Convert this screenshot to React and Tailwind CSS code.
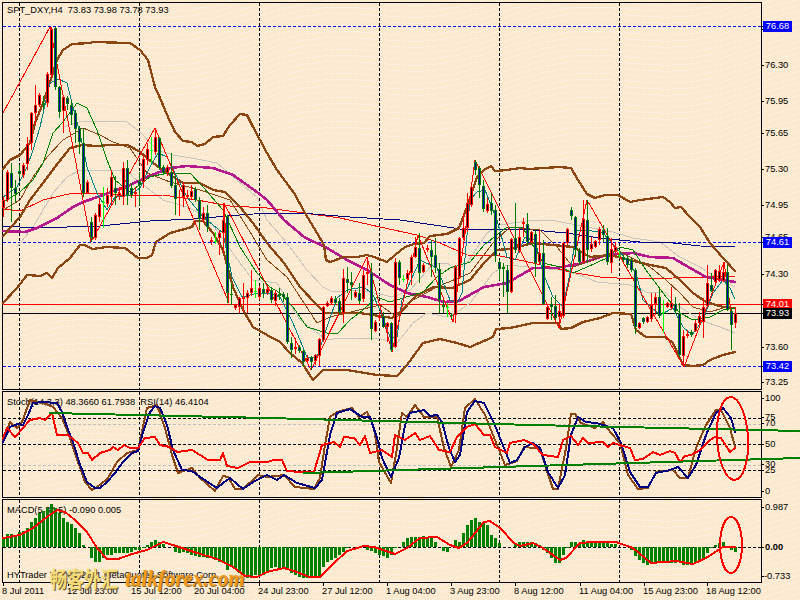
import React from "react";

const C = `3 r 197 200 208 217;7 r 170 172 200 202;11 g 163 173 188 222;15 g 180 188 194 203;19 g 165 171 174 178;23 r 163 165 175 178;27 r 137 144 164 170;31 r 112 113 143 150;35 r 85 105 113 125;39 r 93 95 105 107;43 g 96 103 105 110;47 r 72 74 103 107;51 r 27 29 75 78;55 g 27 28 87 90;59 g 86 87 112 118;63 r 95 97 111 133;67 g 96 98 104 110;71 g 100 105 115 125;75 g 110 113 129 143;79 g 126 128 142 154;83 g 128 143 193 197;87 r 180 182 193 194;91 g 217 222 238 242;95 r 213 215 238 240;99 r 198 204 217 222;103 l 187 202 202 228;107 r 188 195 204 207;111 r 170 177 197 205;115 g 176 188 193 205;119 r 187 193 196 200;123 r 162 168 197 205;127 g 160 168 195 205;131 g 183 188 195 198;135 r 187 192 194 207;139 g 172 181 185 205;143 r 155 159 182 188;147 r 143 149 160 165;151 l 137 150 150 163;155 r 128 137 152 155;159 g 137 138 168 170;163 g 165 167 173 175;167 r 165 167 173 176;171 g 153 172 186 188;175 g 175 185 199 215;179 r 190 197 198 216;183 r 182 185 197 207;187 r 190 195 197 199;191 r 185 191 197 200;195 g 187 189 200 202;199 g 197 200 219 230;203 r 207 213 220 223;207 g 205 213 227 232;211 r 237 240 242 245;215 l 232 241 241 244;219 r 230 233 238 255;223 r 203 220 233 253;227 g 215 216 293 303;231 g 283 294 295 305;235 r 304 305 308 310;239 r 297 298 307 313;243 r 283 297 299 312;247 r 290 293 298 313;251 r 270 288 293 296;255 l 280 291 291 298;259 r 286 288 297 300;263 g 283 289 293 298;267 r 288 289 293 295;271 g 288 290 300 303;275 r 290 293 301 306;279 g 288 294 296 300;283 g 292 294 297 302;287 g 293 297 342 344;291 g 337 343 350 358;295 r 338 347 349 354;299 g 345 347 351 353;303 g 350 351 362 367;307 r 355 358 361 363;311 g 356 357 362 370;315 r 354 355 361 365;319 r 338 339 356 366;323 r 306 307 340 342;327 r 301 303 306 307;331 r 296 298 303 304;335 g 296 299 303 305;339 g 298 301 312 315;343 r 269 278 313 323;347 g 267 279 283 293;351 g 272 282 285 300;355 r 290 292 297 298;359 g 283 293 301 304;363 r 270 275 299 302;367 r 258 272 274 285;371 g 263 273 329 340;375 r 320 322 331 332;379 r 312 316 318 321;383 g 312 316 327 328;387 r 322 323 327 342;391 g 322 323 350 352;395 r 258 262 347 348;399 g 260 262 278 285;403 l 275 279 279 282;407 r 270 273 279 283;411 r 255 257 273 285;415 r 237 247 257 258;419 g 233 248 273 283;423 r 263 265 272 273;427 r 245 248 250 252;431 g 240 250 257 277;435 g 238 255 268 273;439 g 263 269 300 313;443 g 300 305 307 313;447 l 303 307 307 317;451 g 313 315 316 319;455 r 265 267 315 323;459 r 237 238 277 279;463 r 213 228 238 240;467 r 193 203 228 232;471 r 183 187 205 207;475 g 160 162 170 175;479 g 166 168 185 198;483 g 180 186 209 212;487 r 198 204 211 213;491 g 193 203 211 215;495 g 205 210 256 262;499 g 260 262 269 280;503 g 263 267 269 297;507 g 265 270 292 313;511 r 238 239 292 293;515 g 203 238 250 253;519 r 228 237 251 253;523 r 218 222 224 237;527 g 213 224 242 245;531 r 231 232 242 243;535 g 230 234 263 277;539 r 230 253 262 265;543 g 240 253 304 305;547 r 306 307 319 320;551 g 297 304 307 320;555 g 295 306 318 320;559 r 305 311 317 327;563 r 242 243 316 318;567 r 228 229 243 245;571 g 207 210 216 220;575 g 216 217 250 257;579 g 248 251 262 265;583 r 200 219 262 263;587 g 200 220 250 263;591 r 237 244 249 252;595 r 240 241 247 248;599 r 227 229 240 245;603 g 225 230 235 242;607 g 228 236 262 265;611 r 238 249 263 273;615 r 242 247 251 253;619 l 250 255 255 258;623 g 255 257 260 262;627 g 255 258 265 268;631 g 258 260 270 272;635 g 268 270 327 334;639 r 322 323 328 329;643 g 317 318 322 324;647 r 316 317 322 323;651 r 293 305 319 322;655 r 293 297 304 315;659 g 288 297 316 318;663 l 300 312 312 333;667 r 302 303 307 308;671 r 287 303 308 310;675 g 297 304 311 313;679 g 303 313 355 357;683 r 330 336 356 367;687 r 330 334 336 338;691 g 330 332 335 337;695 r 320 323 331 332;699 r 312 316 323 325;703 r 298 307 322 338;707 r 265 283 306 307;711 g 273 285 291 292;715 r 269 270 282 283;719 r 265 271 280 282;723 r 262 272 281 282;727 g 265 272 310 311;731 g 309 311 325 350;735 r 307 313 323 328`;

const candles = C.split(";").map((s) => {
  const [x, t, h, top, bot, l] = s.trim().split(" ");
  return { x: +x, t, h: +h, top: +top, bot: +bot, l: +l };
});

const upper = "3,169 10,160 20,155 30,143 35,123 43,103 50,82 57,60 63,50 72,44 90,43 93,42 130,43 140,50 148,60 155,87 160,98 168,117 175,132 183,141 192,142 197,146 205,144 213,137 223,136 230,125 240,114 247,115 253,127 260,140 267,153 277,170 294,193 305,213 317,233 324,245 326,260 330,262 344,257 357,257 367,255 374,257 387,262 395,255 405,247 414,244 424,243 430,236 447,234 459,228 467,207 477,177 484,170 491,166 495,171 507,170 520,168 529,169 559,167 571,168 578,180 587,194 595,198 605,195 618,195 630,202 640,200 663,197 670,202 675,208 681,207 690,217 700,227 710,243 723,258 735,271";
const middle = "3,236 20,217 30,200 43,183 55,167 70,148 82,145 97,146 110,145 128,145 140,152 153,163 170,175 183,183 200,183 213,190 225,192 240,207 253,223 267,243 284,263 300,287 317,305 325,313 360,313 392,318 400,312 417,295 434,287 452,288 470,280 484,263 497,250 510,249 533,243 553,245 573,247 590,257 610,255 630,260 650,265 666,268 680,280 693,293 706,302 723,307 735,308";
const lower = "3,303 17,288 27,275 40,276 47,273 52,278 58,268 70,258 80,245 85,245 92,249 107,247 125,248 138,258 147,258 152,255 156,242 170,233 192,227 195,221 203,221 213,233 223,250 233,287 243,310 253,327 267,335 280,342 290,353 302,363 313,380 323,370 347,370 377,375 397,376 407,365 423,343 440,339 457,343 470,347 493,337 496,329 510,328 533,323 558,323 561,329 571,328 583,322 600,318 613,313 631,314 636,330 646,337 665,337 673,343 683,365 693,366 703,365 710,360 723,355 735,352";
const magenta = "3,231 25,232 37,228 57,218 73,207 83,202 92,199 130,185 147,177 170,168 187,166 213,168 233,175 257,192 267,200 284,220 304,237 327,248 347,260 367,270 390,285 407,293 427,297 444,302 459,301 484,287 507,283 533,268 556,268 583,263 606,255 633,253 650,257 673,258 690,268 706,277 723,280 735,282";
const navy = "3,226 20,227 67,227 100,226 150,221 193,219 227,216 267,213 300,213 350,217 400,220 434,225 460,229 500,229 533,230 566,233 600,238 640,242 673,243 700,246 735,247";
const redMa = "3,209 20,211 43,200 73,193 100,193 129,196 163,195 197,200 230,206 267,208 304,213 340,218 380,227 417,235 440,243 467,255 500,256 533,263 570,272 600,277 633,279 673,278 706,277 735,276";
const zig = "3,113 50,27 91,242 155,128 229,303 224,203 311,370 367,257 392,352 418,235 453,322 475,160 559,328 587,200 684,367 724,262 731,312";
const teal = "3,197 17,187 27,167 33,150 40,127 50,83 58,79 67,83 72,103 80,133 87,167 97,193 107,210 115,197 130,195 140,188 150,167 158,153 167,157 175,173 187,197 203,217 223,233 227,253 232,277 242,297 258,293 270,293 280,297 293,323 307,357 317,357 327,327 337,298 347,290 363,287 372,293 380,310 390,337 397,337 402,300 420,260 437,268 450,300 457,303 462,293 470,200 477,192 485,190 497,220 507,257 515,260 525,237 535,240 543,273 553,297 563,307 570,273 577,230 587,230 603,233 620,252 636,273 643,300 660,315 673,308 683,327 692,335 703,320 713,293 723,280 730,288 735,299";
const green = "3,202 20,192 33,180 43,163 53,133 63,122 77,103 87,108 97,130 107,160 115,180 130,192 150,177 167,173 190,173 203,187 223,210 240,247 257,273 270,287 280,293 293,307 307,327 327,333 338,333 350,320 363,310 377,297 390,302 403,298 423,292 437,277 450,268 470,262 484,245 507,227 523,228 543,263 560,267 573,273 587,267 607,258 620,247 633,250 646,270 666,297 680,313 693,320 710,317 723,310 735,308";
const brownThin = "3,210 20,200 33,177 47,157 63,140 83,128 100,135 113,142 130,148 147,173 170,182 200,190 230,200 247,227 267,260 287,277 304,303 317,323 330,317 380,305 397,317 413,300 437,287 470,273 480,260 493,243 510,227 540,230 557,247 573,267 593,260 617,250 630,257 650,267 666,280 680,293 693,307 710,312 723,308 735,307";
const greyUp = "63,127 82,121 127,122 140,132 157,150 173,155 197,159 217,163 237,180 257,197 267,220 287,243 307,270 323,287 333,292 360,290 393,297 410,290 434,263 447,263 457,270 467,263 487,233 500,225 533,220 556,221 613,232 633,238 660,242 680,257 700,267 720,280 735,287";
const greyLow = "17,247 33,227 53,193 67,177 80,170 100,170 127,170 133,177 163,200 187,207 207,217 240,263 253,280 277,283 300,320 327,340 340,338 377,338 397,343 413,323 427,313 447,317 460,310 470,303 493,273 507,265 560,270 580,275 597,282 630,285 646,292 666,293 680,307 700,320 720,327 735,333";

const stochBlue = "3,442 10,427 18,424 23,425 28,415 33,403 43,402 57,403 62,412 67,427 73,442 80,465 87,482 95,488 100,488 107,482 115,473 123,462 132,453 138,451 143,432 150,412 155,406 160,408 167,425 173,450 182,470 192,471 200,477 217,488 223,483 230,478 243,489 253,482 267,475 277,480 284,475 297,483 315,488 322,480 330,435 337,413 350,409 362,417 370,417 377,438 382,458 391,477 399,458 405,425 410,413 424,410 430,416 437,415 442,422 449,448 455,462 460,455 467,412 475,401 484,403 494,423 504,448 510,463 517,460 525,447 533,443 540,448 548,472 558,488 565,475 571,435 578,417 586,422 596,423 613,428 621,443 630,472 640,487 648,487 656,473 670,470 678,467 688,478 696,465 706,435 716,413 723,408 731,418 735,432";
const stochBrown = "3,440 10,422 17,428 22,422 30,400 43,403 53,407 62,418 70,438 78,462 85,482 92,490 100,485 108,478 117,462 127,453 138,450 147,408 157,405 165,428 172,455 178,473 192,468 200,478 215,491 223,476 228,477 235,489 243,489 258,475 267,477 284,475 295,487 314,489 320,478 325,445 330,417 337,412 352,408 359,417 367,412 374,428 379,462 391,483 397,448 402,413 407,417 415,405 424,417 437,417 444,448 451,467 459,450 465,408 475,399 485,415 497,445 505,465 517,461 524,447 533,448 540,448 546,468 553,489 558,489 566,448 571,414 575,414 581,423 595,428 603,422 611,433 620,443 628,475 638,489 648,488 656,472 673,470 680,478 688,478 696,448 706,425 716,410 721,410 730,428 735,447";
const rsi = "3,438 7,428 15,437 23,428 30,420 40,418 45,420 52,413 57,435 68,435 78,443 83,453 88,453 92,460 100,453 110,450 113,447 118,450 124,445 130,448 138,448 145,438 155,437 160,445 170,447 177,452 192,450 200,455 208,460 220,460 223,453 227,466 238,468 250,462 267,462 274,460 282,460 287,471 300,472 314,472 322,445 334,442 340,447 344,437 354,438 360,445 365,436 370,453 382,450 392,457 395,435 405,440 415,433 420,440 430,436 439,450 450,452 457,437 467,427 475,424 484,435 490,435 495,447 507,453 510,443 524,440 533,444 543,455 558,457 563,440 571,436 578,445 583,438 588,443 603,442 608,447 613,443 630,448 635,460 643,459 653,452 660,455 670,451 675,453 680,462 685,456 691,455 700,450 710,440 715,437 721,438 730,452 735,448";
const macdLine = "3,538 20,535 33,528 47,517 57,510 65,512 75,520 87,532 97,548 107,559 118,559 132,554 147,550 163,542 173,545 197,553 217,559 233,567 245,576 257,577 267,572 284,568 297,572 309,577 320,577 332,565 347,551 364,546 374,547 395,554 407,548 420,538 437,537 450,545 459,548 467,543 484,522 490,521 500,528 514,543 520,546 533,543 543,548 560,560 566,558 580,543 593,542 616,542 633,548 651,563 676,561 693,564 706,558 723,547 735,547";

const h1 = [455,447,447,455,440,437,430,410,398,385,378,370,358,368,385,398,410,418,430,445,480,487,520,530,530,520,510,510,505,505,503,503,500,495,495,490,480,470,465,470,478,485,487,500,505,500,505,510,512,515,515,518,520,525,530,535,555,545,550,565,570,578,578,570,570,570];
const h2 = [565,550,545,548,545,548,565,570,575,578,580,578,575,575,545,530,525,518,510,500,490,487,487,487,485,495,498,505,510,512,520,510,490,487,470,460,455,455,455,453,458,460,470,487,497,500,487,465,470,445,420,405,398,410,415,420,450,460,475,487,487,485,478,470,472,470];
const h3 = [470,475,480,495,505,520,535,535,510,490,470,470,475,465,470,470,475,470,473,475,478,478,487,487,487,495,512,525,535,540,535,532,535,535,535,535,535,530,540,540,535,530,530,520,505,490,480,475,470,487,495,500];
const bars = [
  ...h1.map((z, i) => [3 + 4 * i, 385 + z / 3]),
  ...h2.map((z, i) => [267 + 4 * i, 385 + z / 3]),
  ...h3.map((z, i) => [531 + 4 * i, 385 + z / 3]),
];

const dots = (() => {
  let d = "";
  for (let r = -20; r < 130; r++) {
    for (let x = 0; x < 800; x += 3) {
      const y = Math.round(r * 6 - x * 0.12 - 8 * Math.sin(x / 40));
      if (y >= 0 && y < 600) d += `M${x} ${y}h1v1h-1z`;
    }
  }
  return d;
})();

const vgrid = [19, 139, 259, 379, 499, 619];
const priceTicks = [[76.65, 29], [76.30, 65], [75.95, 101], [75.65, 133], [75.30, 169], [74.95, 205], [74.65, 237], [74.30, 274], [73.60, 347], [73.25, 382]];
const priceBoxes = [
  ["76.68", 26, "bg-[#0000ff]"],
  ["74.61", 242, "bg-[#0000ff]"],
  ["74.01", 304, "bg-[#ff0000]"],
  ["73.93", 313, "bg-black"],
  ["73.42", 366, "bg-[#0000ff]"],
];
const lowTicks = [["100", 398], ["75", 417], ["70", 423], ["50", 444], ["30", 464], ["25", 470], ["0", 491], ["0.987", 507], ["0.00", 547], ["-0.733", 576]];
const times = [["8 Jul 2011", 2], ["12 Jul 23:00", 67], ["15 Jul 12:00", 131], ["20 Jul 04:00", 194], ["24 Jul 23:00", 258], ["27 Jul 12:00", 322], ["1 Aug 04:00", 386], ["3 Aug 23:00", 450], ["8 Aug 12:00", 514], ["11 Aug 04:00", 579], ["15 Aug 23:00", 643], ["18 Aug 12:00", 706]];

function Line({ p, c, w = 1 }) {
  return <polyline points={p} fill="none" stroke={c} strokeWidth={w} strokeLinejoin="round" strokeLinecap="round" />;
}

function Candle({ x, t, h, top, bot, l }) {
  if (t === "l") {
    return (
      <g fill="#00ff00">
        <rect x={x} y={h} width="1" height={l - h} />
        <rect x={x - 1} y={top} width="3" height="1" />
      </g>
    );
  }
  const color = t === "r" ? "#ff0000" : "#007a00";
  const fill = t === "r" ? "#000000" : "#0000a8";
  return (
    <g>
      <rect x={x} y={h} width="1" height={l - h} fill={color} />
      <rect x={x - 1} y={top} width="3" height={bot - top} fill={color} />
      {bot - top > 2 && <rect x={x} y={top + 1} width="1" height={bot - top - 2} fill={fill} />}
    </g>
  );
}

function HDash({ y, c, x2 = 761 }) {
  return <line x1="3" x2={x2} y1={y + 0.5} y2={y + 0.5} stroke={c} strokeDasharray="3 2" />;
}

export default function App() {
  return (
    <div className="relative w-[800px] h-[600px] overflow-hidden bg-[#fbeacf] text-black text-[9.3px] leading-[11px] font-['Liberation_Sans',Arial,sans-serif]">
      <svg className="absolute inset-0" width="800" height="600" shapeRendering="crispEdges">
        <path d={dots} fill="#ffffff" fillOpacity="0.8" />
      </svg>

      <div className="relative flex flex-col pl-[2px] pt-[2px] w-[762px]">
        <div className="h-[388px] border border-black pl-[4px] pt-[2px] whitespace-pre">SPT_DXY,H4  73.83 73.98 73.78 73.93</div>
        <div className="h-[107px] mt-[1px] border border-black pl-[4px] pt-[5px] whitespace-pre">Stoch(14,3,3) 48.3660 61.7938  RSI(14) 46.4104</div>
        <div className="h-[84px] mt-[1px] border border-black pl-[4px] pt-[5px] flex flex-col justify-between pb-[1px]">
          <span>MACD(5,34,5) -0.090 0.005</span>
          <span className="whitespace-pre">HYTrader 7 2001-2011 MetaQuotes Software Corp.</span>
        </div>
      </div>

      <svg className="absolute inset-0" width="800" height="600" shapeRendering="crispEdges">
        {vgrid.map((x) => (
          <g key={x} stroke="#000000" strokeDasharray="3 2">
            <line x1={x + 0.5} x2={x + 0.5} y1="3" y2="389" />
            <line x1={x + 0.5} x2={x + 0.5} y1="392" y2="497" />
            <line x1={x + 0.5} x2={x + 0.5} y1="500" y2="582" />
          </g>
        ))}
        <HDash y={26} c="#0000ff" />
        <HDash y={242} c="#0000ff" />
        <HDash y={366} c="#0000ff" />
        <line x1="3" x2="761" y1="304.5" y2="304.5" stroke="#ff0000" />
        <line x1="3" x2="761" y1="313.5" y2="313.5" stroke="#000000" />

        <Line p={greyUp} c="#c8c4bc" />
        <Line p={greyLow} c="#c8c4bc" />
        <Line p={redMa} c="#ff0000" />
        <Line p={navy} c="#000080" w={1} />
        <Line p={magenta} c="#b5178c" w={2.6} />
        <Line p={brownThin} c="#8b4513" />
        <Line p={upper} c="#8b4513" w={2.3} />
        <Line p={middle} c="#8b4513" w={2.3} />
        <Line p={lower} c="#8b4513" w={2.3} />
        <Line p={green} c="#008000" />
        <Line p={teal} c="#008080" />
        <Line p={zig} c="#ff0000" />
        {candles.map((c) => (
          <Candle key={c.x} {...c} />
        ))}

        <HDash y={418} c="#000000" />
        <HDash y={444} c="#000000" />
        <HDash y={470} c="#000000" />
        <HDash y={424} c="#c0c0c0" />
        <HDash y={465} c="#c0c0c0" />
        <Line p={stochBrown} c="#8b4513" w={2} />
        <Line p={stochBlue} c="#000080" w={2} />
        <Line p={rsi} c="#ff0000" w={2} />
        <Line p="50,413 267,418 533,425 800,431" c="#008000" w={2} />
        <Line p="304,473 533,466 800,458" c="#008000" w={2} />
        <ellipse cx="732.5" cy="438.5" rx="15.5" ry="41.5" fill="none" stroke="#ff0000" strokeWidth="2" transform="rotate(-3 732 438)" />

        <HDash y={547} c="#000000" />
        {bars.map(([x, y], i) => {
          const top = Math.min(y, 547);
          const ht = Math.abs(y - 547);
          return ht >= 1 ? <rect key={i} x={x - 1} y={Math.round(top)} width="3" height={Math.round(ht)} fill="#008000" /> : null;
        })}
        <Line p={macdLine} c="#ff0000" w={2} />
        <ellipse cx="731" cy="545" rx="11" ry="28" fill="none" stroke="#ff0000" strokeWidth="2" />

        <g fill="#000000">
          {[...priceTicks.map((p) => p[1]), ...priceBoxes.map((p) => p[1]), ...lowTicks.map((p) => p[1])].map((y, i) => (
            <rect key={i} x="762" y={y} width="2" height="1" />
          ))}
          {times.map(([, x]) => (
            <rect key={x} x={x + 1} y="583" width="1" height="3" />
          ))}
        </g>
      </svg>

      {priceTicks.map(([v, y]) => (
        <span key={v} className="absolute left-[765px] h-[11px]" style={{ top: y - 5 }}>
          {v.toFixed(2)}
        </span>
      ))}
      {lowTicks.map(([v, y], i) => (
        <span key={i} className={`absolute ${v === "-0.733" ? "left-[764px]" : "left-[765px]"} ${v === "0.00" ? "font-bold" : ""} h-[11px]`} style={{ top: y - 5 }}>
          {v}
        </span>
      ))}
      {priceBoxes.map(([v, y, bg]) => (
        <span key={v} className={`absolute left-[763px] w-[29px] h-[11px] text-center text-white ${bg}`} style={{ top: y - 5 }}>
          {v}
        </span>
      ))}
      {times.map(([t, x]) => (
        <span key={t} className="absolute top-[586px] whitespace-pre" style={{ left: x }}>
          {t}
        </span>
      ))}

      <div className="absolute left-[50px] top-[565px] flex items-center gap-[7px] whitespace-pre">
        <span className="inline-block scale-y-125 text-[17px] leading-[26px] font-bold text-[#f6dc78] [text-shadow:1px_1px_0_#6b5a2a] font-['Noto_Sans_CJK_SC',sans-serif]">畅客外汇</span>
        <span className="inline-block scale-y-110 text-[21px] leading-[26px] italic font-bold text-[#f39a1c] [text-shadow:1px_1px_0_#8a6a20] font-['Liberation_Serif',serif]">talkforex.com</span>
      </div>
    </div>
  );
}
